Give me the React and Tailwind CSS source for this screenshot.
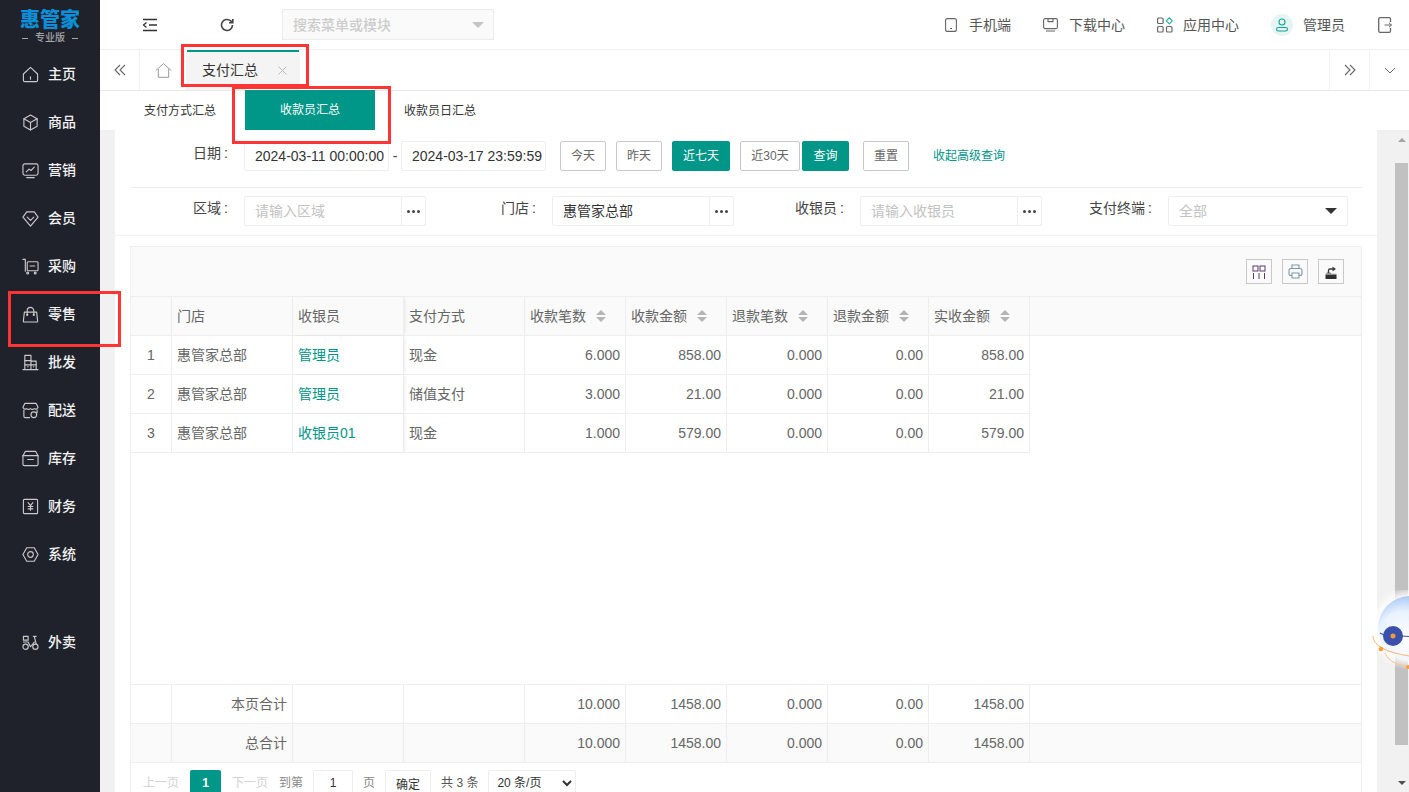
import { useState } from "react";

const ic = { fill: "none", stroke: "currentColor", strokeWidth: 1.2, strokeLinejoin: "round", strokeLinecap: "round" };

function Svg({ size = 18, children, className = "" }) {
  return (
    <svg width={size} height={size} viewBox="0 0 18 18" {...ic} className={className}>
      {children}
    </svg>
  );
}

const navIcons = {
  home: <><path d="M1.5 8.5 9 1.5l7.500 7v6.500a1.500 1.500 0 0 1-1.500 1.500H3a1.500 1.500 0 0 1-1.500-1.500z" /><path d="M9 11.500v2.500" /></>,
  box: <><path d="M9 1 16 5v8l-7 4-7-4V5z" /><path d="M2 5l7 4 7-4M9 9v8" /></>,
  chart: <><rect x="1" y="2" width="16" height="12" rx="2" /><path d="M4.500 10.500l3-3 2 1.500 3.500-3.500M5 16.500h8" /></>,
  vip: <><path d="M5 2h8l4 5.500L9 17 1 7.500z" /><path d="M5.500 7.500 9 11l3.500-3.500" /></>,
  cart: <><path d="M1 1.500h2.500V14" /><rect x="5.500" y="4" width="11.500" height="9.500" rx="1" /><path d="M8.500 8.500h5" /><circle cx="6" cy="16" r="1" /><circle cx="14" cy="16" r="1" /></>,
  bag: <><path d="M2.500 6.500h13l1 9a1 1 0 0 1-1 1.500h-13a1 1 0 0 1-1-1.500z" /><path d="M5.500 9V5a3.500 3.500 0 0 1 7 0v4" /><circle cx="5.500" cy="9.500" r=".6" /><circle cx="12.500" cy="9.500" r=".6" /></>,
  building: <><path d="M3 16.500V1.500h6.500v15M9.500 7.500H15v9M1 16.500h16" /><path d="M3 7h6.500M3 11.500h12M6 13.500h.5M12 13.500h.5" /></>,
  store: <><path d="M3 1.500h12l2 4a2.500 2.500 0 0 1-4 1.500 3 3 0 0 1-4 0 3 3 0 0 1-4 0 2.500 2.500 0 0 1-4-1.500z" /><path d="M2 8.500V15a1.500 1.500 0 0 0 1.500 1.500H8M16 8.500v3" /><circle cx="12.500" cy="13.500" r="3" /></>,
  archive: <><path d="M3.500 1.500h11L17 6v9a1.500 1.500 0 0 1-1.500 1.500h-13A1.500 1.500 0 0 1 1 15V6z" /><path d="M1 6h16M6 10h6" /></>,
  yen: <><rect x="1.500" y="1.500" width="15" height="15" rx="1" /><path d="M6.500 5 9 8l2.500-3M6.500 9h5M6.500 11.500h5M9 8v5" /></>,
  gear: <><path d="M5 1.800h8L17 9l-4 7.200H5L1 9z" /><circle cx="9" cy="9" r="3" /></>,
  moto: <><circle cx="3.800" cy="13.500" r="2.800" /><circle cx="14.200" cy="13.500" r="2.800" /><path d="M1.500 2.500h5v4h-5zM1.500 8.500h5l2.500 5M12 2.500h3M13 2.500l2 8M9 13.500l4-5" /></>,
};

const nav = [
  ["home", "主页"],
  ["box", "商品"],
  ["chart", "营销"],
  ["vip", "会员"],
  ["cart", "采购"],
  ["bag", "零售"],
  ["building", "批发"],
  ["store", "配送"],
  ["archive", "库存"],
  ["yen", "财务"],
  ["gear", "系统"],
];

function NavItem({ icon, label }) {
  return (
    <div className="flex h-12 items-center pl-[22px] text-[#c9cacc]">
      <Svg size={17}>{navIcons[icon]}</Svg>
      <span className="ml-[9px] text-sm font-medium text-[#f2f2f2]">{label}</span>
    </div>
  );
}

function Sidebar() {
  return (
    <aside className="flex h-full w-[100px] shrink-0 flex-col bg-[#1f222b]">
      <div className="flex h-[50px] flex-col items-center pt-[9px]">
        <div className="text-[20px] leading-[22px] font-black text-[#0a8fd8]">惠管家</div>
        <div className="mt-[1px] flex items-center gap-[7px] text-[10px] leading-[12px] font-medium text-[#a5a7ab]">
          <span className="h-px w-[6px] bg-[#a5a7ab]" />
          专业版
          <span className="h-px w-[6px] bg-[#a5a7ab]" />
        </div>
      </div>
      {nav.map(([icon, label]) => (
        <NavItem key={label} icon={icon} label={label} />
      ))}
      <div className="mt-10">
        <NavItem icon="moto" label="外卖" />
      </div>
    </aside>
  );
}

function TopLink({ icon, label, className = "" }) {
  return (
    <div className={`flex items-center text-sm text-[#555] ${className}`}>
      {icon}
      <span>{label}</span>
    </div>
  );
}

function TopBar() {
  return (
    <div className="flex h-[50px] items-center border-b border-[#f0f0f0] bg-white">
      <div className="ml-[42px] text-[#333]">
        <svg width="16" height="14" viewBox="0 0 16 14" fill="none" stroke="currentColor" strokeWidth="1.300">
          <path d="M1 1.500h14M7 7h8M1 12.500h14M4.500 4.500 1.500 7l3 2.500" />
        </svg>
      </div>
      <div className="ml-[62px] text-[#444]">
        <svg width="14" height="14" viewBox="0 0 14 14" fill="none" stroke="currentColor" strokeWidth="1.600">
          <path d="M12.500 7a5.500 5.500 0 1 1-1.800-4.100L12.500 4.500" />
          <path d="M12.800 1v3.800H9" />
        </svg>
      </div>
      <div className="ml-[48px] flex h-[31px] w-[212px] items-center justify-between border border-[#ececec] bg-[#fafafa] pr-[9px] pl-[10px] text-sm font-medium text-[#ccc]">
        搜索菜单或模块
        <span className="h-0 w-0 border-x-[6px] border-t-[6px] border-x-transparent border-t-[#c4c4c4]" />
      </div>
      <div className="ml-auto flex items-center">
        <TopLink
          label="手机端"
          icon={
            <svg width="12" height="14" viewBox="0 0 12 14" fill="none" stroke="#666" strokeWidth="1.100" className="mr-3">
              <rect x="0.600" y="0.600" width="10.800" height="12.800" rx="2" />
              <path d="M5 10.500h2" />
            </svg>
          }
        />
        <TopLink
          className="ml-[32px]"
          label="下载中心"
          icon={
            <svg width="15" height="14" viewBox="0 0 15 14" fill="none" stroke="#666" strokeWidth="1.100" className="mr-[11px]">
              <rect x="0.600" y="0.600" width="13.800" height="10" rx="1.500" />
              <path d="M5 .6v3h5v-3M3 13h9" />
            </svg>
          }
        />
        <TopLink
          className="ml-[32px]"
          label="应用中心"
          icon={
            <svg width="16" height="16" viewBox="0 0 16 16" fill="none" stroke="#666" strokeWidth="1.200" className="mr-[10px]">
              <rect x="0.600" y="1" width="5.500" height="5.500" rx="1" />
              <rect x="0.600" y="9.500" width="5.500" height="5.500" rx="1" />
              <rect x="9.500" y="9.500" width="5.500" height="5.500" rx="1" />
              <path d="M12.300.8l3 3-3 3-3-3z" stroke="#2bb5a5" />
            </svg>
          }
        />
        <div className="ml-[32px] flex h-[22px] w-[22px] items-center justify-center rounded-full bg-[#e6f5f3]">
          <svg width="14" height="14" viewBox="0 0 14 14" fill="none" stroke="#12a898" strokeWidth="1.100">
            <circle cx="7" cy="4" r="3" />
            <rect x="1.500" y="9.500" width="11" height="3.500" rx="1.750" />
          </svg>
        </div>
        <span className="ml-[10px] text-sm text-[#555]">管理员</span>
        <svg width="14" height="16" viewBox="0 0 14 16" fill="none" stroke="#666" strokeWidth="1.300" className="mr-[17px] ml-[33px]">
          <path d="M12.500 5V2a1.300 1.300 0 0 0-1.300-1.300H2A1.300 1.300 0 0 0 .7 2v12A1.300 1.300 0 0 0 2 15.300h9.200a1.300 1.300 0 0 0 1.300-1.300v-3" />
          <path d="M6.500 8h7M11 5.800 13.500 8 11 10.200" strokeWidth="1" />
        </svg>
      </div>
    </div>
  );
}

function TabBar() {
  return (
    <div className="flex h-[41px] items-stretch border-b border-[#e9e9e9] bg-white">
      <div className="flex w-10 items-center justify-center border-r border-[#f0f0f0] text-[#666]">
        <svg width="12" height="12" viewBox="0 0 12 12" fill="none" stroke="currentColor" strokeWidth="1.100">
          <path d="M6 1 1 6l5 5M11 1 6 6l5 5" />
        </svg>
      </div>
      <div className="flex w-[46px] items-center justify-center text-[#999]">
        <svg width="17" height="15" viewBox="0 0 17 15" fill="none" stroke="currentColor" strokeWidth="1">
          <path d="M.8 7.500 8.500.7l7.700 6.800M3.300 6v8.300h10.400V6" />
        </svg>
      </div>
      <div className="relative flex w-[114px] items-center bg-[#f4f4f4] pl-4 text-sm text-[#333]">
        <span className="absolute top-0 right-[1px] left-[1px] h-[2px] bg-[#009688]" />
        支付汇总
        <svg width="9" height="9" viewBox="0 0 9 9" stroke="#bbb" strokeWidth="1" className="ml-[20px]">
          <path d="M.5.500l8 8M8.500.500l-8 8" />
        </svg>
      </div>
      <div className="ml-auto flex w-10 items-center justify-center border-l border-[#f0f0f0] text-[#666]">
        <svg width="12" height="12" viewBox="0 0 12 12" fill="none" stroke="currentColor" strokeWidth="1.100">
          <path d="m1 1 5 5-5 5M6 1l5 5-5 5" />
        </svg>
      </div>
      <div className="flex w-10 items-center justify-center border-l border-[#f0f0f0] text-[#666]">
        <svg width="12" height="7" viewBox="0 0 12 7" fill="none" stroke="currentColor" strokeWidth="1">
          <path d="m1 1 5 5 5-5" />
        </svg>
      </div>
    </div>
  );
}

function SubTabs() {
  return (
    <div className="flex h-[39px] items-stretch bg-white text-xs text-[#333]">
      <div className="ml-[44px] flex items-center pr-[29px]">支付方式汇总</div>
      <div className="-mt-px flex w-[130px] items-center justify-center bg-[#009688] text-white">收款员汇总</div>
      <div className="flex items-center pl-[29px]">收款员日汇总</div>
    </div>
  );
}

function Label({ children }) {
  return (
    <div className="w-[114px] shrink-0 pr-4 pb-[6px] text-right text-sm text-[#444]">
      {children}
      <span className="ml-[3px]">:</span>
    </div>
  );
}

function Btn({ children, green, className = "" }) {
  return (
    <button
      className={`h-[30px] rounded-[2px] text-xs ${green ? "bg-[#009688] text-white" : "border border-[#c9c9c9] bg-white text-[#666]"} ${className}`}
    >
      {children}
    </button>
  );
}

function DateBox({ children }) {
  return (
    <div className="flex h-[30px] w-[145px] items-center rounded-[2px] border border-[#eeeeee] pl-[10px] text-sm whitespace-nowrap text-[#333]">
      {children}
    </div>
  );
}

function PickInput({ value, placeholder }) {
  return (
    <div className="flex h-[30px] w-[182px] rounded-[2px] border border-[#eeeeee] text-sm">
      <div className={`flex flex-1 items-center pl-[10px] ${value ? "text-[#333]" : "text-[#c2c2c2]"}`}>
        {value || placeholder}
      </div>
      <div className="flex w-6 items-center justify-center border-l border-[#eeeeee]">
        <span className="flex gap-[2px]">
          <i className="h-[3px] w-[3px] rounded-full bg-[#444]" />
          <i className="h-[3px] w-[3px] rounded-full bg-[#444]" />
          <i className="h-[3px] w-[3px] rounded-full bg-[#444]" />
        </span>
      </div>
    </div>
  );
}

function Filters() {
  return (
    <div className="border-b border-[#f2f2f2] pb-[9px]">
      <div className="mx-[15px] flex items-center border-b border-[#eeeeee] pt-[11px] pb-4">
        <Label>日期</Label>
        <DateBox>2024-03-11 00:00:00</DateBox>
        <span className="w-3 text-center text-sm text-[#444]">-</span>
        <DateBox>2024-03-17 23:59:59</DateBox>
        <Btn className="ml-[14px] w-[46px]">今天</Btn>
        <Btn className="ml-[10px] w-[46px]">昨天</Btn>
        <Btn green className="ml-[10px] w-[58px]">近七天</Btn>
        <Btn className="ml-[10px] w-[60px]">近30天</Btn>
        <Btn green className="ml-[2px] w-[47px]">查询</Btn>
        <Btn className="ml-[14px] w-[46px]">重置</Btn>
        <span className="ml-6 text-xs text-[#009688]">收起高级查询</span>
      </div>
      <div className="mx-[15px] grid grid-cols-4 pt-2">
        <div className="flex items-center">
          <Label>区域</Label>
          <PickInput placeholder="请输入区域" />
        </div>
        <div className="flex items-center">
          <Label>门店</Label>
          <PickInput value="惠管家总部" />
        </div>
        <div className="flex items-center">
          <Label>收银员</Label>
          <PickInput placeholder="请输入收银员" />
        </div>
        <div className="flex items-center">
          <Label>支付终端</Label>
          <div className="flex h-[30px] w-[180px] items-center justify-between rounded-[2px] border border-[#eeeeee] pr-[10px] pl-[10px] text-sm text-[#c2c2c2]">
            全部
            <span className="h-0 w-0 border-x-[6px] border-t-[6px] border-x-transparent border-t-[#333]" />
          </div>
        </div>
      </div>
    </div>
  );
}

const cols = "grid h-[39px] w-[899px] grid-cols-[41px_121px_111px_121px_101px_101px_101px_101px_101px] text-sm text-[#666]";
const colsThin = "grid h-[38px] w-[899px] grid-cols-[41px_121px_111px_121px_101px_101px_101px_101px_101px] text-sm text-[#666]";
const cell = "flex items-center border-r border-[#eeeeee] px-[5px]";
const num = "flex items-center justify-end border-r border-[#eeeeee] px-[5px]";

const sortHeads = ["收款笔数", "收款金额", "退款笔数", "退款金额", "实收金额"];

function SortArrows() {
  return (
    <span className="ml-[10px] flex flex-col gap-[2px]">
      <i className="h-0 w-0 border-x-[5px] border-b-[5px] border-x-transparent border-b-[#b5b5b5]" />
      <i className="h-0 w-0 border-x-[5px] border-t-[5px] border-x-transparent border-t-[#b5b5b5]" />
    </span>
  );
}

const rows = [
  ["1", "惠管家总部", "管理员", "现金", "6.000", "858.00", "0.000", "0.00", "858.00"],
  ["2", "惠管家总部", "管理员", "储值支付", "3.000", "21.00", "0.000", "0.00", "21.00"],
  ["3", "惠管家总部", "收银员01", "现金", "1.000", "579.00", "0.000", "0.00", "579.00"],
];

const fixedShadow = "relative z-10 shadow-[2px_0_3px_-1px_rgba(0,0,0,0.08)]";

function ToolIcon({ children }) {
  return <div className="flex h-[25px] w-[26px] items-center justify-center border border-[#c9c9c9] bg-transparent">{children}</div>;
}

function TotalRow({ label, className = "" }) {
  return (
    <div className={`border-b border-[#eeeeee] ${className}`}>
      <div className={colsThin}>
        <div className={cell} />
        <div className={num}>{label}</div>
        <div className={cell} />
        <div className={cell} />
        <div className={num}>10.000</div>
        <div className={num}>1458.00</div>
        <div className={num}>0.000</div>
        <div className={num}>0.00</div>
        <div className={num}>1458.00</div>
      </div>
    </div>
  );
}

function DataTable() {
  return (
    <div className="mx-[15px] mt-[10px] border-x border-t border-[#eeeeee]">
      <div className="flex h-[50px] items-center justify-end gap-[10px] border-b border-[#eeeeee] bg-[#fafafa] pr-[17px]">
        <ToolIcon>
          <svg width="14" height="14" viewBox="0 0 14 14" fill="none" stroke="#5a3a6e" strokeWidth="1">
            <rect x="1" y="1" width="5" height="5" />
            <rect x="8" y="1" width="5" height="5" />
            <path d="M1.500 8v6M7 8v6M12.500 8v6" />
          </svg>
        </ToolIcon>
        <ToolIcon>
          <svg width="15" height="15" viewBox="0 0 15 15" fill="none" stroke="#7f97ad" strokeWidth="1.100">
            <path d="M4 4.500V1h7v3.500" />
            <rect x="1" y="4.500" width="13" height="7" rx="2" />
            <path d="M4 9h7v5H4z" fill="#fafafa" />
          </svg>
        </ToolIcon>
        <ToolIcon>
          <svg width="14" height="16" viewBox="0 0 14 16">
            <path d="M1.500 10.500h11V15h-11z" fill="#2f2f2f" />
            <path d="M1.500 10.500 3 8.500h3.500l1 1.200h5v.8z" fill="#8a8a8a" />
            <path d="M4.500 9V6.500A1.500 1.500 0 0 1 6 5h3" fill="none" stroke="#3d3d3d" strokeWidth="1.400" />
            <path d="M8.500 2.500 12 5 8.500 7.500z" fill="#3d3d3d" />
          </svg>
        </ToolIcon>
      </div>

      <div className="border-b border-[#eeeeee] bg-[#fafafa]">
        <div className={colsThin}>
          <div className={cell} />
          <div className={cell}>门店</div>
          <div className={`${cell} ${fixedShadow}`}>收银员</div>
          <div className={cell}>支付方式</div>
          {sortHeads.map((h) => (
            <div key={h} className={cell}>
              {h}
              <SortArrows />
            </div>
          ))}
        </div>
      </div>

      <div className="h-[349px] border-b border-[#eeeeee]">
        {rows.map((r) => (
          <div key={r[0]} className={`${cols} border-b border-[#eeeeee]`}>
            <div className={`${cell} justify-center`}>{r[0]}</div>
            <div className={cell}>{r[1]}</div>
            <div className={`${cell} ${fixedShadow} text-[#009688]`}>{r[2]}</div>
            <div className={cell}>{r[3]}</div>
            {r.slice(4).map((v, i) => (
              <div key={i} className={num}>{v}</div>
            ))}
          </div>
        ))}
      </div>

      <TotalRow label="本页合计" />
      <TotalRow label="总合计" className="bg-[#fafafa]" />

      <div className="flex h-10 items-start pt-[7px] pl-[12px] text-xs text-[#666]">
        <span className="mt-[5px] text-[#d2d2d2]">上一页</span>
        <span className="ml-[11px] flex h-[30px] w-[31px] justify-center rounded-[2px] bg-[#009688] pt-[5px] font-bold text-white">1</span>
        <span className="mt-[5px] ml-[11px] text-[#d2d2d2]">下一页</span>
        <span className="mt-[5px] ml-[11px] text-[#888]">到第</span>
        <span className="ml-[10px] flex h-[30px] w-10 justify-center rounded-[2px] border border-[#eeeeee] pt-1 text-[#333]">1</span>
        <span className="mt-[5px] ml-[10px] text-[#888]">页</span>
        <span className="ml-[10px] flex h-[30px] w-[46px] justify-center rounded-[2px] border border-[#eeeeee] pt-[6px] text-[#333]">确定</span>
        <span className="mt-[5px] ml-[10px] text-[#555]">共 3 条</span>
        <select defaultValue="20" className="ml-[10px] h-[26px] w-[88px] rounded-[2px] border border-[#eeeeee] bg-white pl-1 text-xs text-[#333]">
          <option value="20">20 条/页</option>
        </select>
      </div>
    </div>
  );
}

function Scrollbar() {
  return (
    <div className="flex w-[15px] shrink-0 flex-col items-center bg-[#f1f1f1]">
      <span className="mt-[8px] h-0 w-0 border-x-[4px] border-b-[4px] border-x-transparent border-b-[#a3a3a3]" />
      <div className="mt-[21px] h-[582px] w-[13px] bg-[#c1c1c1]" />
      <span className="mt-[36px] h-0 w-0 border-x-[4px] border-t-[4px] border-x-transparent border-t-[#505050]" />
    </div>
  );
}

function Mascot() {
  return (
    <svg width="44" height="90" viewBox="0 0 44 90" className="absolute top-[590px] left-[1365px]">
      <defs>
        <radialGradient id="ball" cx="0.42" cy="0.68" r="0.8">
          <stop offset="0" stopColor="#ffffff" />
          <stop offset="0.55" stopColor="#e9f2ff" />
          <stop offset="1" stopColor="#8db6ee" />
        </radialGradient>
        <radialGradient id="halo" cx="0.5" cy="0.5" r="0.5">
          <stop offset="0.75" stopColor="#ffffff" stopOpacity="0.9" />
          <stop offset="1" stopColor="#ffffff" stopOpacity="0" />
        </radialGradient>
      </defs>
      <circle cx="45" cy="38" r="42" fill="url(#halo)" />
      <circle cx="45" cy="38" r="32" fill="url(#ball)" />
      <path d="M8 46Q8 60 44 66" fill="none" stroke="#ffb46e" strokeWidth="1" />
      <path d="M20 63Q24 74 44 77" fill="none" stroke="#ffc48c" strokeWidth="1" />
      <path d="M15 43l6 3M37 46l7 .5" stroke="#3f55aa" strokeWidth="1.200" />
      <circle cx="28" cy="46" r="10" fill="#3a50ab" />
      <circle cx="28" cy="46" r="2.500" fill="#f39a3c" />
      <circle cx="16" cy="59" r="2.300" fill="#ff9d3a" />
      <circle cx="43" cy="77" r="2" fill="#ff9d3a" />
    </svg>
  );
}

export default function App() {
  const [tab] = useState("cashier");
  return (
    <div
      data-tab={tab}
      className="relative flex h-screen overflow-hidden bg-[#f1f1f1] font-['Liberation_Sans','Noto_Sans_CJK_SC',sans-serif]"
    >
      <Sidebar />
      <div className="flex min-w-0 flex-1 flex-col">
        <TopBar />
        <TabBar />
        <SubTabs />
        <div className="flex min-h-0 flex-1 overflow-hidden">
          <div className="ml-[15px] h-[700px] w-[1262px] shrink-0 bg-white">
            <Filters />
            <DataTable />
          </div>
          <div className="ml-auto">
            <Scrollbar />
          </div>
        </div>
      </div>

      <Mascot />

      <div className="pointer-events-none absolute top-[44px] left-[181px] h-[43px] w-[128px] border-[3px] border-[#ff3535]" />
      <div className="pointer-events-none absolute top-[86px] left-[232px] h-[58px] w-[159px] border-[3px] border-[#ff3535]" />
      <div className="pointer-events-none absolute top-[291px] left-[8px] h-[56px] w-[113px] border-[3px] border-[#ff3535]" />
    </div>
  );
}
